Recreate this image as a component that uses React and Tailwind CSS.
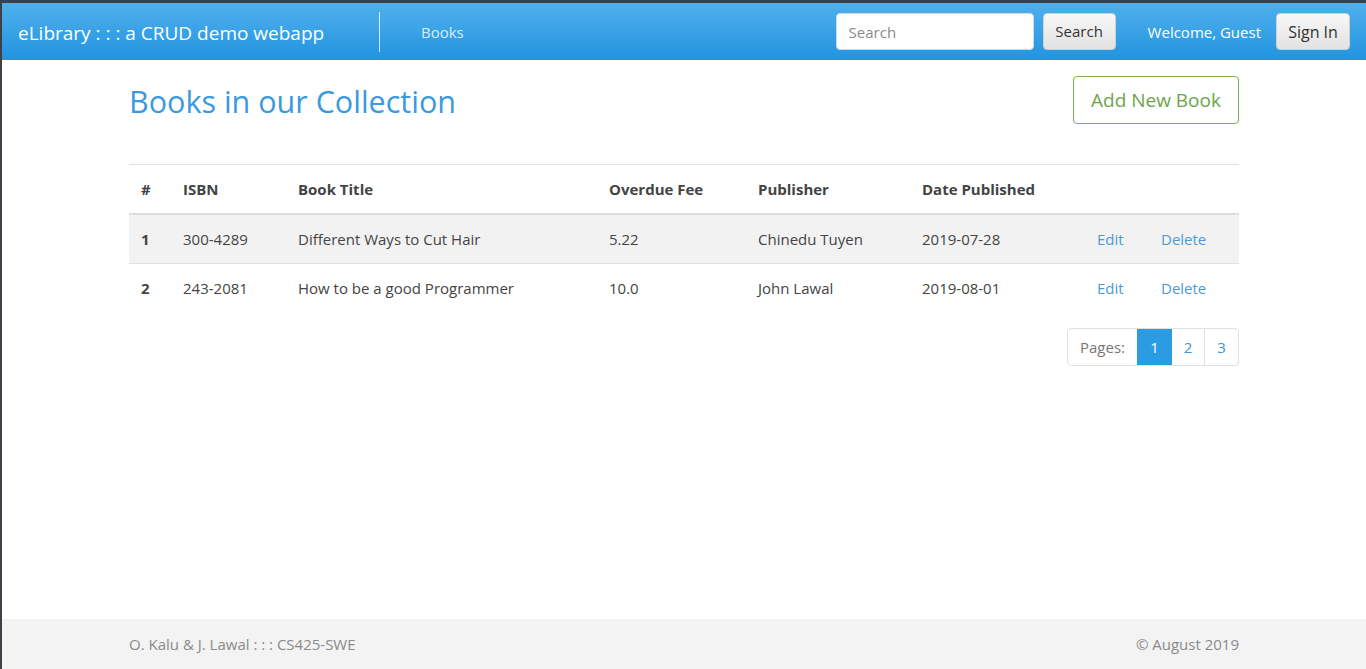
const books = [
  { id: 1, isbn: "300-4289", title: "Different Ways to Cut Hair", fee: "5.22", publisher: "Chinedu Tuyen", date: "2019-07-28" },
  { id: 2, isbn: "243-2081", title: "How to be a good Programmer", fee: "10.0", publisher: "John Lawal", date: "2019-08-01" },
];

const cols = "grid grid-cols-[42px_115px_311px_149px_164px_175px_64px_90px] items-center";

function Navbar() {
  return (
    <nav className="flex h-[57px] items-center bg-gradient-to-b from-[#4eb0ec] to-[#1f94e0] pl-[16px] pr-[16px]">
      <span className="w-[361px] pt-[3px] text-[19px] text-white">eLibrary : : : a CRUD demo webapp</span>
      <div className="h-[40px] w-px bg-white/80" />
      <a className="ml-[41px] pt-[2px] text-[15px] text-[#d8eefc]">Books</a>
      <div className="ml-auto flex items-center">
        <input
          placeholder="Search"
          className="h-[37px] w-[198px] rounded border border-[#cfd8de] bg-white px-3 text-[15px] text-[#444] placeholder-[#8a8a8a] outline-none"
        />
        <button className="ml-[9px] h-[37px] w-[73px] rounded border border-[#d0d0d0] bg-gradient-to-b from-[#f8f8f8] to-[#e2e2e2] text-[15px] text-[#333]">
          Search
        </button>
        <span className="ml-[32px] pt-[2px] text-[15px] text-white">Welcome, Guest</span>
        <button className="ml-[15px] h-[37px] w-[74px] rounded border border-[#d0d0d0] bg-gradient-to-b from-[#f8f8f8] to-[#e2e2e2] text-[16px] text-[#333]">
          Sign In
        </button>
      </div>
    </nav>
  );
}

function BooksTable() {
  return (
    <div className="mt-[39px] text-[15px] text-[#444]">
      <div className={cols + " h-[51px] border-t border-b-2 border-t-[#dee2e6] border-b-[#dcdcdc] font-bold"}>
        <span className="px-3">#</span>
        <span className="px-3">ISBN</span>
        <span className="px-3">Book Title</span>
        <span className="px-3">Overdue Fee</span>
        <span className="px-3">Publisher</span>
        <span className="px-3">Date Published</span>
        <span />
        <span />
      </div>
      {books.map((b, i) => (
        <div
          key={b.id}
          className={cols + (i % 2 === 0 ? " h-[48px] bg-[#f2f2f2]" : " h-[49px] border-t border-[#dee2e6]")}
        >
          <span className="px-3 font-bold">{b.id}</span>
          <span className="px-3">{b.isbn}</span>
          <span className="px-3">{b.title}</span>
          <span className="px-3">{b.fee}</span>
          <span className="px-3">{b.publisher}</span>
          <span className="px-3">{b.date}</span>
          <a className="px-3 text-[#4d9ad8]">Edit</a>
          <a className="px-3 text-[#4d9ad8]">Delete</a>
        </div>
      ))}
    </div>
  );
}

function Pagination() {
  return (
    <div className="mt-[16px] flex justify-end">
      <div className="flex h-[38px] overflow-hidden rounded border border-[#dee2e6] text-[15px]">
        <span className="flex items-center px-[12px] text-[#777]">Pages:</span>
        <span className="flex w-[35px] items-center justify-center bg-[#2b9be3] text-white">1</span>
        <span className="flex w-[33px] items-center justify-center border-r border-[#dee2e6] text-[#3a97d9]">2</span>
        <span className="flex w-[33px] items-center justify-center text-[#3a97d9]">3</span>
      </div>
    </div>
  );
}

export default function App() {
  return (
    <div
      className="flex h-[669px] flex-col border-t-[3px] border-l-2 border-[#3c4149] bg-white"
      style={{ fontFamily: '"Open Sans", "Noto Sans", sans-serif' }}
    >
      <Navbar />
      <main className="flex-1">
        <div className="mx-auto w-[1110px]">
          <div className="mt-[16px] flex items-center justify-between">
            <h1 className="pt-[3px] text-[30.5px] text-[#3b9ade]">Books in our Collection</h1>
            <button className="h-[48px] w-[166px] rounded border border-[#7fae52] text-[19px] text-[#6ea44a]">
              Add New Book
            </button>
          </div>
          <BooksTable />
          <Pagination />
        </div>
      </main>
      <footer className="h-[50px] bg-[#f3f3f3]">
        <div className="mx-auto flex h-full w-[1110px] items-center justify-between text-[15px] text-[#8a8a8a]">
          <span>O. Kalu &amp; J. Lawal : : : CS425-SWE</span>
          <span>© August 2019</span>
        </div>
      </footer>
    </div>
  );
}
